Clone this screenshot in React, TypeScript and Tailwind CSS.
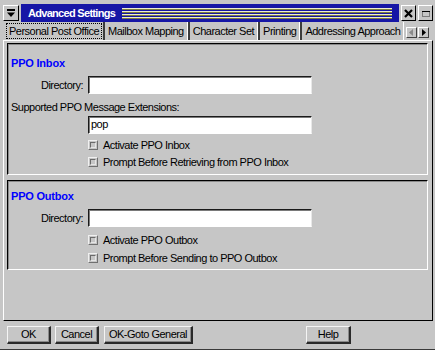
import React from 'react';

const FONT = "font-['Liberation_Sans',Arial,sans-serif]";

function Field({ value = '' }: { value?: string }) {
  return (
    <div className="h-[18px] w-[224px] border border-t-[#1a1a1a] border-l-[#1a1a1a] border-b-white border-r-[#e8e8e8] bg-white px-[2px] text-[11px] leading-[15px] text-black shadow-[inset_1px_1px_0_#7a7a7a]">
      {value}
    </div>
  );
}

function Check({ label, className = '' }: { label: string; className?: string }) {
  return (
    <div className={`flex h-[14px] items-center gap-[5px] pl-[80px] ${className}`}>
      <span className="flex h-[10px] w-[10px] items-center justify-center border border-t-[#f0f0f0] border-l-[#f0f0f0] border-b-[#707070] border-r-[#707070] bg-[#c6c6c6]">
        <span className="h-[6px] w-[6px] border border-t-[#6a6a6a] border-l-[#6a6a6a] border-b-[#e6e6e6] border-r-[#e6e6e6]" />
      </span>
      <span>{label}</span>
    </div>
  );
}

function DirectoryRow({ className = '' }: { className?: string }) {
  return (
    <div className={`flex h-[18px] items-center ${className}`}>
      <div className="w-[76px] pr-[1px] text-right">Directory:</div>
      <div className="ml-[4px]">
        <Field />
      </div>
    </div>
  );
}

function Heading({ children, className = '' }: { children: React.ReactNode; className?: string }) {
  return (
    <div className={`h-[14px] pl-[3px] text-[11px] font-bold leading-[14px] tracking-[-0.2px] text-[#0000ff] ${className}`}>
      {children}
    </div>
  );
}

function GroupBox({ children, className = '' }: { children: React.ReactNode; className?: string }) {
  return (
    <div
      className={`flex flex-col border border-t-black border-l-black border-b-white border-r-white shadow-[inset_1px_1px_0_#8a8a8a] ${className}`}
    >
      {children}
    </div>
  );
}

function Button({ label, className = '' }: { label: string; className?: string }) {
  return (
    <button
      type="button"
      className={`flex h-[18px] items-center justify-center border-t border-l border-b-2 border-r-2 border-t-[#f4f4f4] border-l-[#f4f4f4] border-b-[#2a2a2a] border-r-[#2a2a2a] bg-[#c6c6c6] text-[11px] leading-none tracking-[-0.5px] text-black shadow-[inset_-1px_-1px_0_#8a8a8a] ${className}`}
    >
      {label}
    </button>
  );
}

function TitleButton({ children }: { children: React.ReactNode }) {
  return (
    <div className="flex h-[16px] w-[15px] items-center justify-center border border-t-white border-l-white border-b-black border-r-black bg-[#c6c6c6]">
      {children}
    </div>
  );
}

export default function App() {
  const tabs = ['Mailbox Mapping', 'Character Set', 'Printing', 'Addressing Approach'];

  return (
    <div
      className={`${FONT} flex h-[350px] w-[435px] flex-col overflow-hidden border-b border-b-[#3a3a3a] bg-[#c6c6c6] pb-[5px] pl-[3px] pr-[2px] pt-[4px] text-[11px] tracking-[-0.5px] text-black`}
    >
      {/* title bar */}
      <div className="flex h-[18px] items-center gap-[2px]">
        <div className="flex h-[16px] w-[16px] items-center justify-center border border-t-white border-l-white border-b-black border-r-black bg-[#c6c6c6]">
          <svg width="10" height="10" viewBox="0 0 10 10">
            <rect x="1" y="1" width="8" height="2" fill="#000" />
            <path d="M1 4.5 L9 4.5 L5 9 Z" fill="#000" />
          </svg>
        </div>
        <div className="flex h-[18px] flex-1 items-center bg-[#1616a6] pl-[7px] pr-[7px]">
          <span className="whitespace-nowrap text-[11px] font-bold tracking-[-0.7px] text-white">
            Advanced Settings
          </span>
          <div className="ml-[7px] flex flex-1 flex-col gap-[1px]">
            {[0, 1, 2, 3].map((i) => (
              <div key={i} className="flex flex-col">
                <div className="h-px bg-[#ececd4]" />
                <div className="h-px bg-[#7c7c3c]" />
              </div>
            ))}
          </div>
        </div>
        <TitleButton>
          <svg width="9" height="9" viewBox="0 0 9 9">
            <path d="M1 1 L8 8 M8 1 L1 8" stroke="#000" strokeWidth="2.2" />
          </svg>
        </TitleButton>
        <TitleButton>
          <svg width="10" height="9" viewBox="0 0 10 9">
            <rect x="1.5" y="2.5" width="7" height="5" fill="none" stroke="#303030" strokeDasharray="1 1" />
            <line x1="1" y1="2.5" x2="9" y2="2.5" stroke="#000" />
          </svg>
        </TitleButton>
      </div>

      {/* tabs */}
      <div className="flex h-[18px] items-stretch">
        <div className="flex min-w-0 flex-1 overflow-hidden pl-[3px]">
          <div className="mb-[1px] mt-[1px] flex items-center whitespace-nowrap border border-dotted border-black px-[2px]">
            Personal Post Office
          </div>
          <div className="ml-[1px] flex min-w-0 overflow-hidden">
            {tabs.map((t) => (
              <div
                key={t}
                className="flex shrink-0 items-center whitespace-nowrap border-l-2 border-r border-l-[#3c3c3c] border-r-white pl-[3px] pr-[3px]"
              >
                {t}
              </div>
            ))}
          </div>
        </div>
        <div className="flex items-end gap-px pb-[2px] pr-[4px]">
          <div className="flex h-[11px] w-[11px] items-center justify-center border border-t-white border-l-white border-b-[#404040] border-r-[#404040]">
            <svg width="5" height="7" viewBox="0 0 5 7">
              <path d="M4 0 L0 3.5 L4 7 Z" fill="#8a8a8a" />
            </svg>
          </div>
          <div className="flex h-[11px] w-[11px] items-center justify-center border border-t-white border-l-white border-b-[#404040] border-r-[#404040]">
            <svg width="5" height="7" viewBox="0 0 5 7">
              <path d="M1 0 L5 3.5 L1 7 Z" fill="#000" />
            </svg>
          </div>
        </div>
      </div>

      {/* tab page */}
      <div className="flex flex-1 flex-col border border-t-white border-l-white border-b-black border-r-black pl-[3px] pr-[4px] pt-[2px]">
        <GroupBox className="h-[132px]">
          <Heading className="mt-[12px]">PPO Inbox</Heading>
          <DirectoryRow className="mt-[6px]" />
          <div className="mt-[6px] h-[14px] pl-[3px] leading-[14px]">Supported PPO Message Extensions:</div>
          <div className="mt-[2px] pl-[80px]">
            <Field value="pop" />
          </div>
          <Check className="mt-[4px]" label="Activate PPO Inbox" />
          <Check className="mt-[3px]" label="Prompt Before Retrieving from PPO Inbox" />
        </GroupBox>

        <GroupBox className="mt-[5px] h-[90px]">
          <Heading className="mt-[8px]">PPO Outbox</Heading>
          <DirectoryRow className="mt-[6px]" />
          <Check className="mt-[6px]" label="Activate PPO Outbox" />
          <Check className="mt-[4px]" label="Prompt Before Sending to PPO Outbox" />
        </GroupBox>
      </div>

      {/* buttons */}
      <div className="mt-[5px] flex h-[18px] items-center pl-[4px]">
        <Button label="OK" className="w-[44px]" />
        <Button label="Cancel" className="ml-[4px] w-[44px]" />
        <Button label="OK-Goto General" className="ml-[5px] w-[89px]" />
        <Button label="Help" className="ml-[113px] w-[45px]" />
      </div>
    </div>
  );
}
